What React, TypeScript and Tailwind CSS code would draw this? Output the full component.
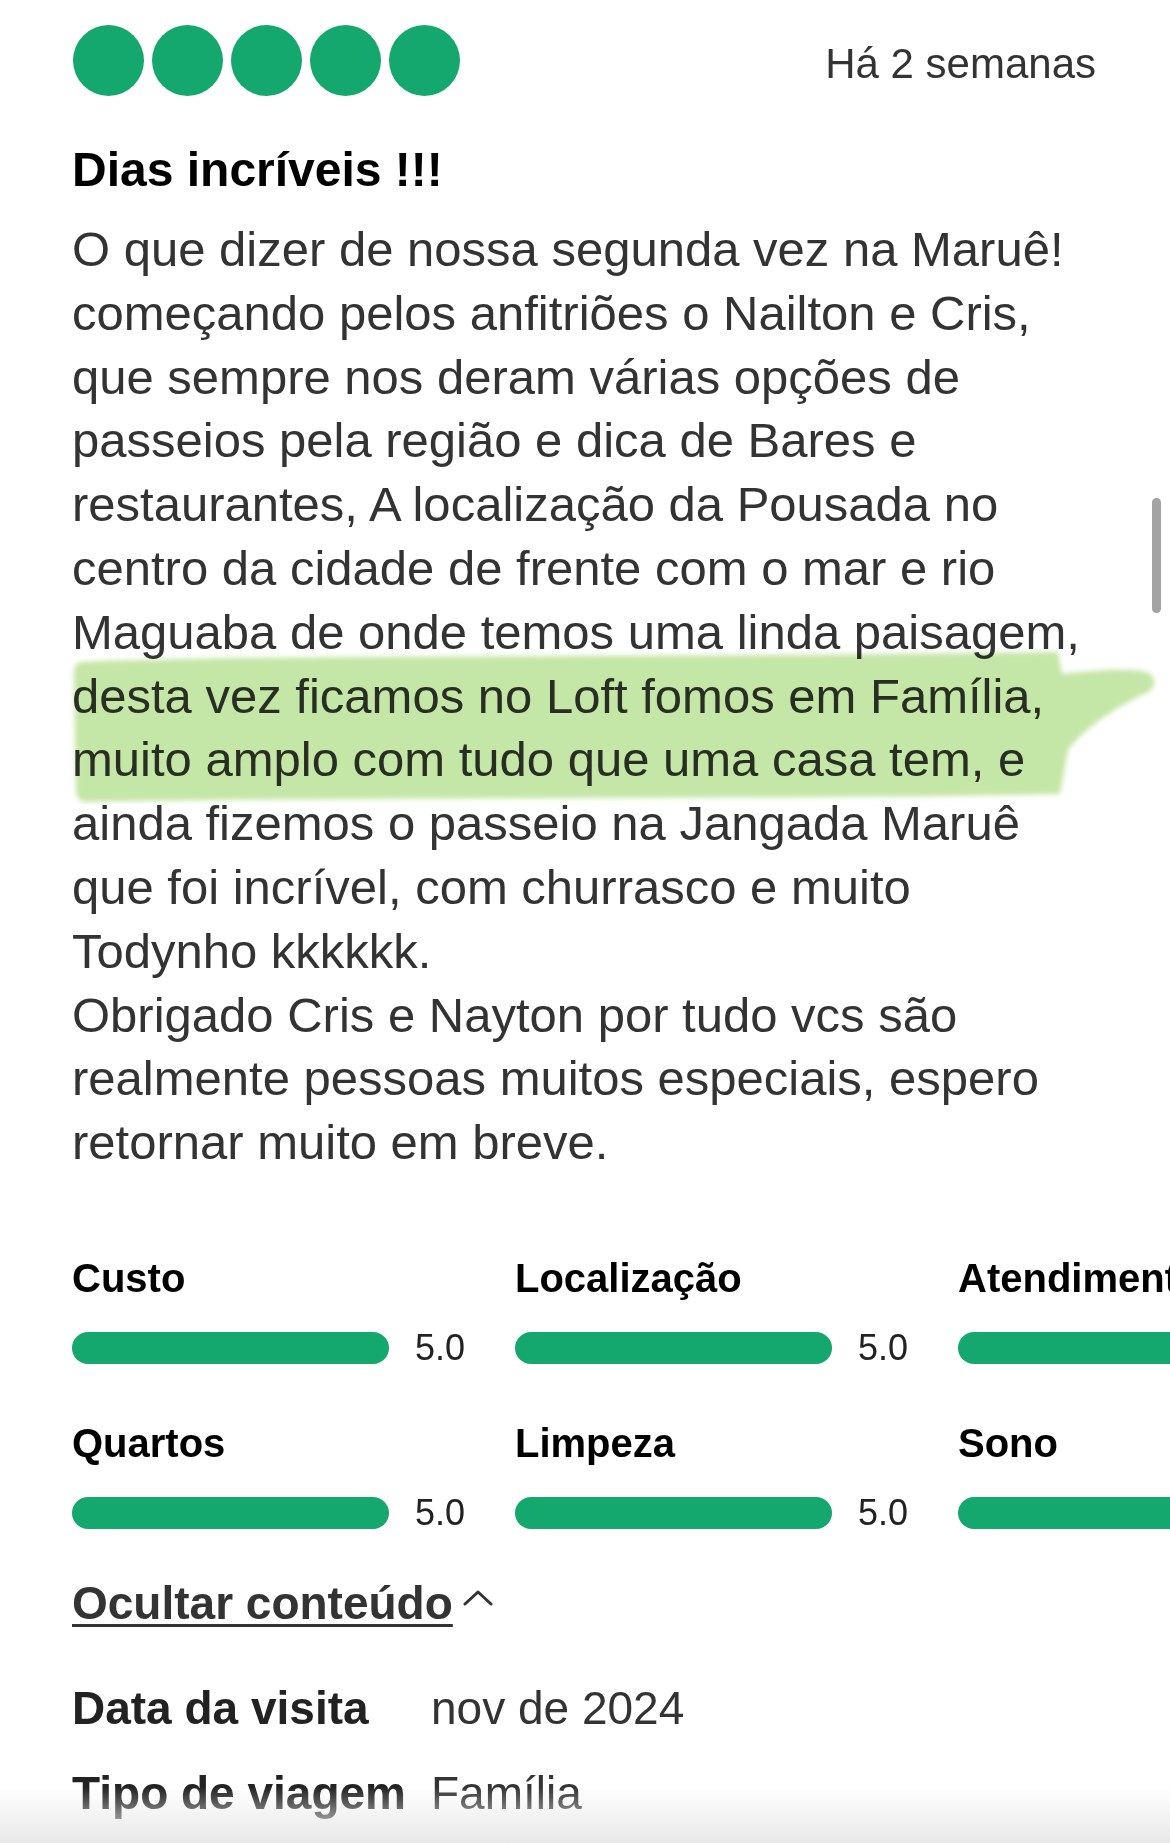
const bodyLines = [
  "O que dizer de nossa segunda vez na Maruê!",
  "começando pelos anfitriões o Nailton e Cris,",
  "que sempre nos deram várias opções de",
  "passeios pela região e dica de Bares e",
  "restaurantes, A localização da Pousada no",
  "centro da cidade de frente com o mar e rio",
  "Maguaba de onde temos uma linda paisagem,",
  "desta vez ficamos no Loft fomos em Família,",
  "muito amplo com tudo que uma casa tem, e",
  "ainda fizemos o passeio na Jangada Maruê",
  "que foi incrível, com churrasco e muito",
  "Todynho kkkkkk.",
  "Obrigado Cris e Nayton por tudo vcs são",
  "realmente pessoas muitos especiais, espero",
  "retornar muito em breve."
];

const ratings = [
  { label: "Custo", value: "5.0" },
  { label: "Localização", value: "5.0" },
  { label: "Atendimento", value: "5.0" },
  { label: "Quartos", value: "5.0" },
  { label: "Limpeza", value: "5.0" },
  { label: "Sono", value: "5.0" }
];

function Highlight() {
  return (
    <svg
      className="pointer-events-none absolute left-[-4px] top-[426px] mix-blend-multiply"
      width="1100"
      height="160"
      viewBox="0 0 1100 160"
      aria-hidden="true"
    >
      <defs>
        <filter id="soft" x="-5%" y="-20%" width="110%" height="140%">
          <feGaussianBlur stdDeviation="2.5" />
        </filter>
      </defs>
      <path
        d="M12 18 C 200 10, 600 14, 990 8 L 994 30 C 1030 26, 1060 24, 1078 28 C 1090 32, 1088 46, 1076 50 C 1050 62, 1016 84, 1000 106 L 992 150 C 700 156, 300 152, 16 158 Q 8 156 8 146 L 6 30 Q 6 20 12 18 Z"
        fill="#c4e6a6"
        filter="url(#soft)"
      />
    </svg>
  );
}

export default function App() {
  return (
    <div className="relative h-[1843px] w-[1170px] overflow-hidden bg-white font-['Liberation_Sans',Arial,sans-serif]">
      <header className="flex items-start justify-between pl-[73px] pr-[74px] pt-[25px]">
        <div className="flex gap-[8px]">
          {[0, 1, 2, 3, 4].map((i) => (
            <span
              key={i}
              className="h-[71px] w-[71px] rounded-full bg-[#14a86e]"
            />
          ))}
        </div>
        <p className="pt-[18px] text-[42px] leading-[41px] text-[#333]">
          Há 2 semanas
        </p>
      </header>

      <main className="pl-[72px]">
        <h1 className="mt-[46px] text-[48px] font-bold leading-[56px] text-black">
          Dias incríveis !!!
        </h1>

        <div className="relative mt-[20px] pr-[40px] text-[49px] leading-[63.8px] text-[#333]">
          {bodyLines.map((line) => (
            <span key={line} className="block whitespace-nowrap">
              {line}
            </span>
          ))}
          <Highlight />
        </div>

        <div className="mt-[79px] grid grid-cols-[443px_443px_443px] gap-y-[53px]">
          {ratings.map((item) => (
            <div key={item.label} className="flex flex-col">
              <span className="whitespace-nowrap text-[40px] font-bold leading-[48px] text-black">
                {item.label}
              </span>
              <div className="mt-[28px] flex items-center gap-[26px]">
                <span className="h-[32px] w-[317px] rounded-full bg-[#14a86e]" />
                <span className="text-[36px] leading-[36px] text-[#222]">
                  {item.value}
                </span>
              </div>
            </div>
          ))}
        </div>

        <button className="mt-[44px] flex items-center gap-[10px] text-[#333]">
          <span className="text-[46px] font-bold leading-[56px] underline decoration-[3px] underline-offset-[5px]">
            Ocultar conteúdo
          </span>
          <svg width="30" height="16" viewBox="0 0 30 16" className="mb-[10px]" aria-hidden="true">
            <polyline
              points="2,14 15,2 28,14"
              fill="none"
              stroke="#333"
              strokeWidth="3"
              strokeLinecap="round"
              strokeLinejoin="round"
            />
          </svg>
        </button>

        <dl className="mt-[49px] grid grid-cols-[359px_1fr] gap-y-[29px] text-[46px] leading-[56px]">
          <dt className="font-bold text-[#222]">Data da visita</dt>
          <dd className="text-[#333]">nov de 2024</dd>
          <dt className="font-bold text-[#222]">Tipo de viagem</dt>
          <dd className="text-[#333]">Família</dd>
        </dl>
      </main>

      <div className="absolute left-[1152px] top-[498px] h-[115px] w-[9px] rounded-full bg-[#a3a3a3]" />
      <div className="pointer-events-none absolute bottom-0 left-0 h-[56px] w-full bg-gradient-to-b from-white/0 to-[#e8e8e8]" />
    </div>
  );
}
